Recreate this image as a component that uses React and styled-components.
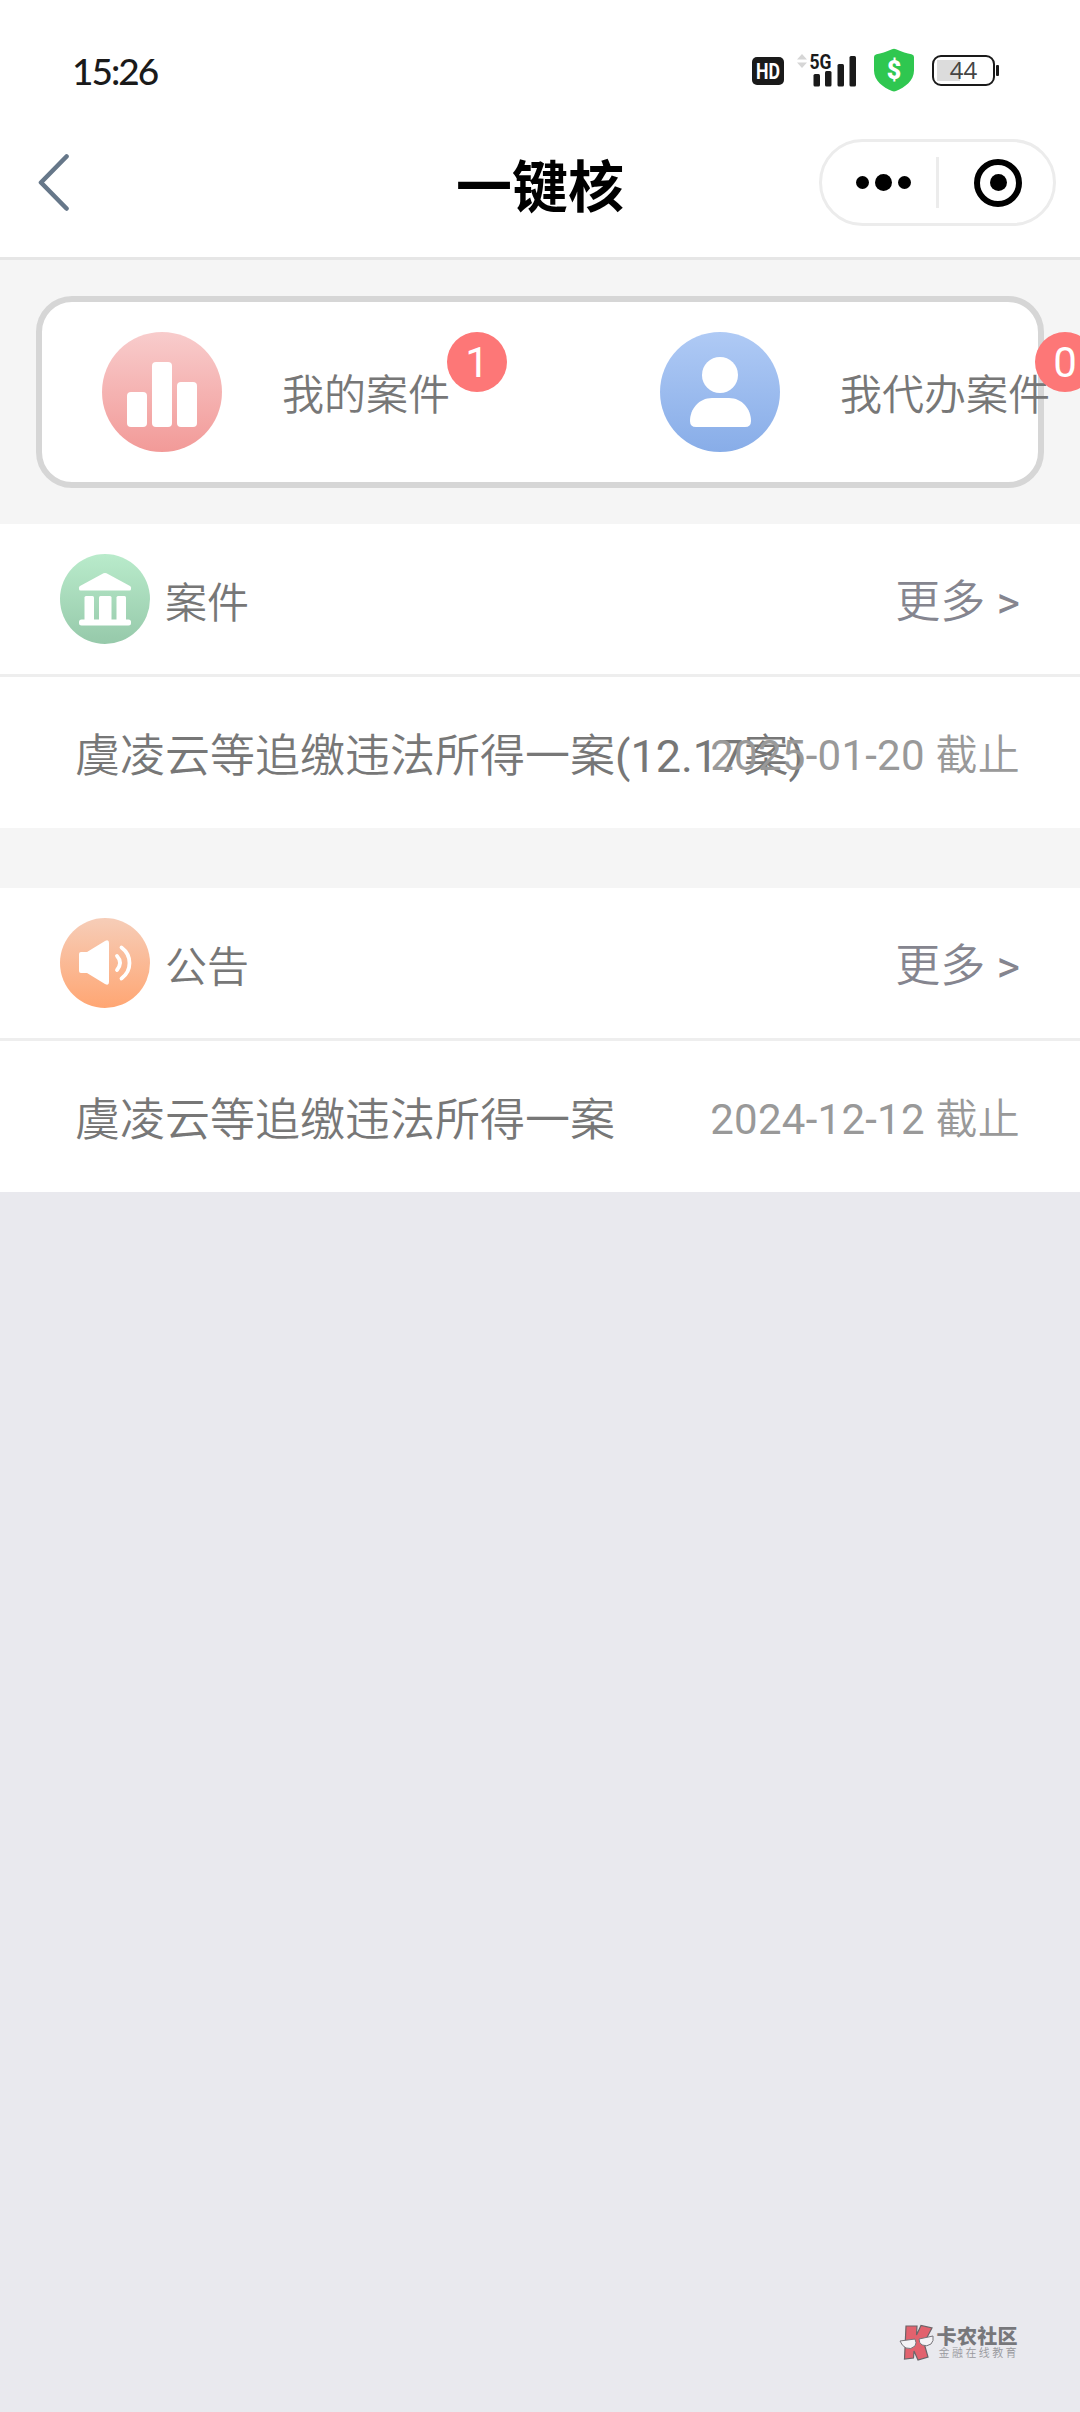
import React from "react";
import styled, { createGlobalStyle } from "styled-components";

const GlobalStyle = createGlobalStyle`
  * {
    box-sizing: border-box;
  }
  body {
    margin: 0;
    background-color: #e9e9ee;
    font-family: Roboto, "Noto Sans CJK SC DemiLight", "Noto Sans CJK SC", sans-serif;
  }
`;

const sections = [
  {
    id: "case",
    title: "案件",
    rows: [
      {
        name: "虞凌云等追缴违法所得一案(12.17案)",
        date: "2025-01-20 截止",
      },
    ],
  },
  {
    id: "notice",
    title: "公告",
    rows: [{ name: "虞凌云等追缴违法所得一案", date: "2024-12-12 截止" }],
  },
];

const HdIcon = () => (
  <svg width="32" height="28" viewBox="0 0 32 28" overflow="visible">
    <rect width="32" height="28" rx="5" fill="#1a1a1a" />
    <text
      x="4"
      y="22"
      fontSize="22"
      fontWeight="700"
      fill="#fff"
      textLength="24"
      lengthAdjust="spacingAndGlyphs"
    >
      HD
    </text>
  </svg>
);

const SignalIcon = () => (
  <svg width="60" height="36" viewBox="0 0 60 36" overflow="visible">
    <path d="M5 2l5 5.500H0zM5 16l5-5.500H0z" fill="#d6d6d6" />
    <g fill="#1a1a1a">
      <rect x="16.500" y="22" width="6.500" height="12.500" rx="1.500" />
      <rect x="28" y="19" width="6.500" height="15.500" rx="1.500" />
      <rect x="40.500" y="12" width="6.500" height="22.500" rx="1.500" />
      <rect x="52.500" y="4" width="6.500" height="30.500" rx="1.500" />
    </g>
    <text
      x="12.500"
      y="17"
      fontSize="21"
      fontWeight="700"
      fill="#1a1a1a"
      stroke="#fff"
      strokeWidth="2"
      paintOrder="stroke"
      textLength="22"
      lengthAdjust="spacingAndGlyphs"
    >
      5G
    </text>
  </svg>
);

const ShieldIcon = () => (
  <svg width="40" height="43" viewBox="0 0 40 43" overflow="visible">
    <path
      d="M18 .3q2-.9 4 0C28 3.100 33 4.500 37.500 5.200Q40 5.700 40 8V21.500C40 31.500 31 38.500 22 42q-2 .8-4 0C9 38.500 0 31.500 0 21.500V8Q0 5.700 2.500 5.200C7 4.500 12 3.100 18 .3z"
      fill="#2fc750"
    />
    <text
      x="20"
      y="29.500"
      fontSize="25"
      fontWeight="900"
      fill="#fff"
      textAnchor="middle"
    >
      $
    </text>
  </svg>
);

const BackIcon = () => (
  <svg width="32" height="60" viewBox="0 0 32 60">
    <path
      d="M28.500 3.500L3 29.500 28.500 55.500"
      fill="none"
      stroke="#667789"
      strokeWidth="4.600"
      strokeLinecap="round"
      strokeLinejoin="round"
    />
  </svg>
);

const ChartIcon = () => (
  <svg width="120" height="120" viewBox="0 0 120 120">
    <defs>
      <linearGradient id="red" x1="0" y1="0" x2="0" y2="1">
        <stop offset="0" stopColor="#f8cccc" />
        <stop offset="1" stopColor="#f29a98" />
      </linearGradient>
    </defs>
    <circle cx="60" cy="60" r="60" fill="url(#red)" />
    <g fill="#fff">
      <rect x="25" y="60" width="20" height="35" rx="4" />
      <rect x="50" y="30" width="20" height="65" rx="4" />
      <rect x="75" y="50" width="20" height="45" rx="4" />
    </g>
  </svg>
);

const PersonIcon = () => (
  <svg width="120" height="120" viewBox="0 0 120 120">
    <defs>
      <linearGradient id="blue" x1="0" y1="0" x2="0" y2="1">
        <stop offset="0" stopColor="#afcaf5" />
        <stop offset="1" stopColor="#88ade8" />
      </linearGradient>
    </defs>
    <circle cx="60" cy="60" r="60" fill="url(#blue)" />
    <circle cx="60" cy="43" r="18" fill="#fff" />
    <path
      d="M52 66h17c13 0 22 11 22 23q0 6-6 6H36q-6 0-6-6c0-12 9-23 22-23z"
      fill="#fff"
    />
  </svg>
);

const CourtIcon = () => (
  <svg width="90" height="90" viewBox="0 0 90 90">
    <defs>
      <linearGradient id="green" x1="0" y1="0" x2="0" y2="1">
        <stop offset="0" stopColor="#b9ebcb" />
        <stop offset="1" stopColor="#96c9aa" />
      </linearGradient>
    </defs>
    <circle cx="45" cy="45" r="45" fill="url(#green)" />
    <g fill="#fff">
      <path d="M43.500 19.300q1.500-.8 3 0L70 32q1 .6 1 1.500V35q0 1.500-1.500 1.500h-49Q19 36.500 19 35v-1.500q0-.9 1-1.500z" />
      <rect x="24.500" y="42" width="9.500" height="26" rx="1.500" />
      <rect x="39" y="42" width="12.500" height="26" rx="1.500" />
      <rect x="56.500" y="42" width="9.500" height="26" rx="1.500" />
      <rect x="19" y="65.500" width="52" height="6" rx="2.500" />
    </g>
  </svg>
);

const SpeakerIcon = () => (
  <svg width="90" height="90" viewBox="0 0 90 90">
    <defs>
      <linearGradient id="orange" x1="0" y1="0" x2="0" y2="1">
        <stop offset="0" stopColor="#f6cdb8" />
        <stop offset="1" stopColor="#ffa673" />
      </linearGradient>
    </defs>
    <circle cx="45" cy="45" r="45" fill="url(#orange)" />
    <path
      d="M21 34h6L45 23q4-2 4 2v39q0 4-4 2L27 55h-6q-2 0-2-2V36q0-2 2-2z"
      fill="#fff"
    />
    <g fill="none" stroke="#fff" strokeWidth="3.800" strokeLinecap="round">
      <path d="M57 38q6 6.500 0 14" />
      <path d="M61.500 29.500q8 6 8 15.500t-8 15.500" />
    </g>
  </svg>
);

const WatermarkLogo = () => (
  <svg width="36" height="38" viewBox="0 0 36 38">
    <path
      d="M7 3h11l-.500 9L22 2.500 33 5l-8 15 4 14-10 3-4-9-.500 7-9 1z"
      fill="#e2626e"
      stroke="#6b6468"
      strokeWidth="1.200"
    />
    <g fill="#f4f3f6" stroke="#77747a" strokeWidth="1">
      <path d="M1 18l15-2q2 4 0 7-4 4-9 2-4-2-6-7z" />
      <path d="M20 16l14-3q1 5-2 8-4 3-9 1-3-2-3-6z" />
    </g>
  </svg>
);

const sectionIcons = { case: <CourtIcon />, notice: <SpeakerIcon /> };

const App = () => {
  return (
    <Page>
      <GlobalStyle />
      <StatusBar>
        <Time>15:26</Time>
        <StatusIcons>
          <HdIcon />
          <SignalIcon />
          <ShieldIcon />
          <Battery>
            <BatteryBody>44</BatteryBody>
            <BatteryTip />
          </Battery>
        </StatusIcons>
      </StatusBar>

      <NavBar>
        <BackIcon />
        <NavTitle>一键核</NavTitle>
        <Capsule>
          <Dots>
            <Dot $size={13} />
            <Dot $size={17} />
            <Dot $size={13} />
          </Dots>
          <Divider />
          <Ring>
            <Dot $size={17} />
          </Ring>
        </Capsule>
      </NavBar>

      <Summary>
        <SummaryCard>
          <SummaryItem>
            <ChartIcon />
            <SummaryLabel>
              我的案件
              <Badge $overlap={3}>1</Badge>
            </SummaryLabel>
          </SummaryItem>
          <SummaryItem>
            <PersonIcon />
            <SummaryLabel>
              我代办案件
              <Badge $overlap={15}>0</Badge>
            </SummaryLabel>
          </SummaryItem>
        </SummaryCard>
      </Summary>

      <Sections>
        {sections.map((section) => (
          <Section key={section.id}>
            <SectionHeader>
              {sectionIcons[section.id]}
              <SectionTitle>{section.title}</SectionTitle>
              <More>更多 &gt;</More>
            </SectionHeader>
            {section.rows.map((row) => (
              <Row key={row.name}>
                <RowName>{row.name}</RowName>
                <RowDate>{row.date}</RowDate>
              </Row>
            ))}
          </Section>
        ))}
      </Sections>

      <Watermark>
        <WatermarkLogo />
        <div>
          <WatermarkName>卡农社区</WatermarkName>
          <WatermarkSlogan>金融在线教育</WatermarkSlogan>
        </div>
      </Watermark>
    </Page>
  );
};

const Page = styled.div`
  display: flex;
  flex-direction: column;
  width: 1080px;
  height: 2412px;
  overflow: hidden;
  background-color: #e9e9ee;
`;

const StatusBar = styled.div`
  display: flex;
  flex: none;
  align-items: center;
  justify-content: space-between;
  height: 110px;
  padding: 30px 81px 0 72px;
  background-color: #fff;
`;

const Time = styled.div`
  padding-top: 1px;
  font-family: Lato, sans-serif;
  font-size: 37px;
  font-weight: 500;
  letter-spacing: -2px;
  line-height: 40px;
  color: #1a1a1a;
`;

const StatusIcons = styled.div`
  display: flex;
  align-items: center;
  height: 44px;

  svg:nth-of-type(1) {
    margin-top: 2px;
  }
  svg:nth-of-type(2) {
    margin: 0 17px 0 13px;
  }
`;

const Battery = styled.div`
  display: flex;
  align-items: center;
  gap: 1px;
  margin-left: 18px;
`;

const BatteryBody = styled.div`
  width: 63px;
  height: 31px;
  border: 2.5px solid #1a1a1a;
  border-radius: 9px;
  background: linear-gradient(#dcdcdc, #dcdcdc) 3px 3px / 23px 21px no-repeat;
  color: #444;
  font-family: "Open Sans", sans-serif;
  font-size: 24px;
  line-height: 26px;
  text-align: center;
`;

const BatteryTip = styled.div`
  width: 3px;
  height: 11px;
  border-radius: 1px;
  background-color: #1a1a1a;
`;

const NavBar = styled.div`
  display: grid;
  flex: none;
  grid-template-columns: 1fr auto 1fr;
  align-items: center;
  height: 150px;
  padding: 0 24px 2px 38px;
  border-bottom: 3px solid #e6e6e6;
  background-color: #fff;
`;

const NavTitle = styled.div`
  padding-right: 14px;
  font-size: 56px;
  font-weight: 700;
  font-family: "Noto Sans CJK SC", sans-serif;
  line-height: 80px;
  color: #000;
`;

const Capsule = styled.div`
  display: flex;
  align-items: center;
  justify-self: end;
  width: 237px;
  height: 87px;
  border: 3px solid #ececec;
  border-radius: 44px;
`;

const Dots = styled.div`
  display: flex;
  align-items: center;
  gap: 6px;
  margin-left: 34px;
`;

const Dot = styled.span`
  width: ${(props) => props.$size}px;
  height: ${(props) => props.$size}px;
  border-radius: 50%;
  background-color: #000;
`;

const Divider = styled.div`
  width: 3px;
  height: 51px;
  margin: 0 35px 0 25px;
  background-color: #ececec;
`;

const Ring = styled.div`
  display: flex;
  align-items: center;
  justify-content: center;
  width: 48px;
  height: 48px;
  border: 6px solid #000;
  border-radius: 50%;
`;

const Summary = styled.div`
  flex: none;
  height: 264px;
  padding: 36px;
  background-color: #f5f5f5;
`;

const SummaryCard = styled.div`
  display: flex;
  height: 192px;
  padding-left: 60px;
  border: 6px solid #d6d6d6;
  border-radius: 36px;
  background-color: #fff;
`;

const SummaryItem = styled.div`
  display: flex;
  flex: none;
  align-items: center;
  gap: 60px;
  width: 558px;
`;

const SummaryLabel = styled.div`
  position: relative;
  height: 120px;
  font-size: 42px;
  line-height: 128px;
  white-space: nowrap;
  color: #777;
`;

const Badge = styled.span`
  position: absolute;
  top: 0;
  left: calc(100% - ${(props) => props.$overlap}px);
  width: 60px;
  height: 60px;
  border-radius: 50%;
  background-color: #fd7777;
  color: #fff;
  line-height: 61px;
  text-align: center;
`;

const Sections = styled.div`
  display: flex;
  flex: none;
  flex-direction: column;
  gap: 60px;
  background-color: #f5f5f5;
`;

const Section = styled.div`
  background-color: #fff;
`;

const SectionHeader = styled.div`
  display: flex;
  align-items: center;
  height: 153px;
  padding: 0 60px;
  border-bottom: 3px solid #eee;
`;

const SectionTitle = styled.div`
  margin-left: 15px;
  font-size: 42px;
  color: #777;
`;

const More = styled.div`
  margin-left: auto;
  padding-bottom: 1px;
  font-size: 45px;
  color: #85858f;
`;

const Row = styled.div`
  position: relative;
  display: flex;
  align-items: center;
  height: 151px;
  padding: 0 60px 0 75px;
`;

const RowName = styled.div`
  font-size: 45px;
  white-space: nowrap;
  color: #777;
`;

// a long name runs underneath the date
const RowDate = styled.div`
  position: absolute;
  right: 60px;
  padding-bottom: 3px;
  font-size: 42px;
  letter-spacing: 0.25px;
  white-space: nowrap;
  color: #999;
`;

const Watermark = styled.div`
  display: flex;
  align-items: center;
  gap: 2px;
  margin: auto 61px 51px auto;
`;

const WatermarkName = styled.div`
  font-family: "Noto Sans CJK SC", sans-serif;
  font-size: 20px;
  font-weight: 900;
  letter-spacing: 0.3px;
  line-height: 22px;
  color: #77777b;
`;

const WatermarkSlogan = styled.div`
  padding-left: 2px;
  font-size: 11px;
  letter-spacing: 2.4px;
  line-height: 13px;
  color: #98989d;
`;

export default App;
